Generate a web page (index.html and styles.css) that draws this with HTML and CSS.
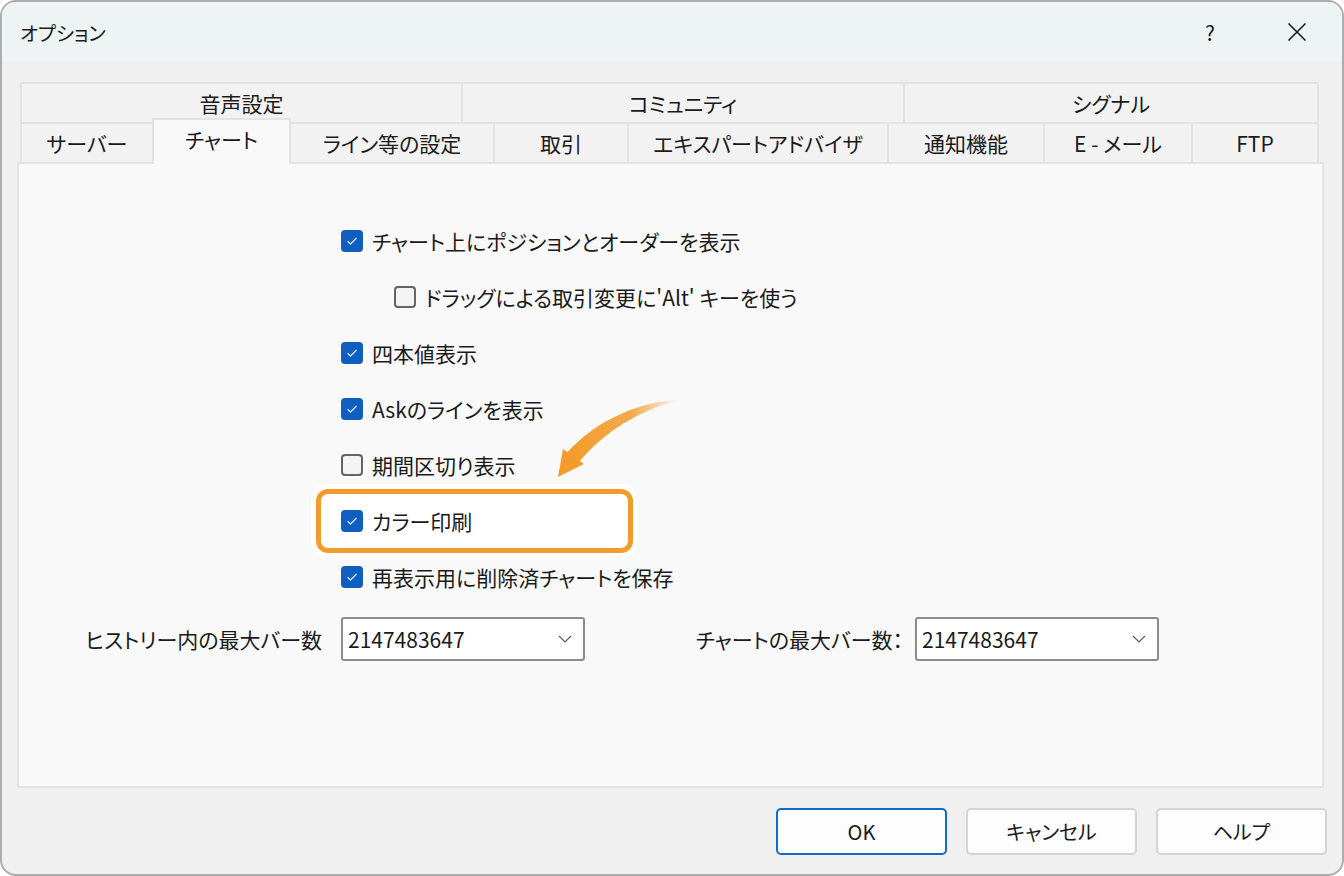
FILE: index.html
```html
<!DOCTYPE html>
<html lang="ja">
<head>
    <meta charset="UTF-8">
    <title>オプション</title>
    <link rel="stylesheet" href="styles.css">
</head>
<body>
    <div class="window">
        <div class="titlebar">
            <span class="title">オプション</span>
            <span class="help">?</span>
            <span class="close">
                <svg width="20" height="20" viewBox="0 0 20 20"><path d="M1.5 1.5 L18.5 18.5 M18.5 1.5 L1.5 18.5" stroke="#1a1a1a" stroke-width="1.6" fill="none"/></svg>
            </span>
        </div>
        <div class="body">
            <div class="tabs">
                <div class="tab-row row-top">
                    <div class="tab">音声設定</div>
                    <div class="tab">コミュニティ</div>
                    <div class="tab last">シグナル</div>
                </div>
                <div class="tab-row row-bottom">
                    <div class="tab">サーバー</div>
                    <div class="tab active">チャート</div>
                    <div class="tab">ライン等の設定</div>
                    <div class="tab">取引</div>
                    <div class="tab">エキスパートアドバイザ</div>
                    <div class="tab">通知機能</div>
                    <div class="tab">E - メール</div>
                    <div class="tab last">FTP</div>
                </div>
            </div>

            <div class="panel">
                <!-- annotation arrow -->
                <svg class="arrow" width="130" height="84" viewBox="0 0 130 84">
                    <defs>
                        <linearGradient id="fade" x1="128" y1="0" x2="20" y2="0" gradientUnits="userSpaceOnUse">
                            <stop offset="0" stop-color="#f39c2d" stop-opacity="0"/>
                            <stop offset="0.45" stop-color="#f39c2d" stop-opacity="0.85"/>
                            <stop offset="1" stop-color="#f39c2d"/>
                        </linearGradient>
                    </defs>
                    <path d="M127 2 C92 3 45 20 14 56 L27 64 C52 34 88 12 127 2 Z" fill="url(#fade)"/>
                    <polygon points="6,79 11,51 32,66" fill="#f39c2d"/>
                </svg>

                <div class="options">
                    <div class="option"><span class="check on"><svg width="12" height="10" viewBox="0 0 12 10"><path d="M1.5 5.2 L4.5 8 L10.5 2" stroke="#d5e3f5" stroke-width="1.3" fill="none"/></svg></span>チャート上にポジションとオーダーを表示</div>
                    <div class="option sub"><span class="check"></span>ドラッグによる取引変更に'Alt' キーを使う</div>
                    <div class="option"><span class="check on"><svg width="12" height="10" viewBox="0 0 12 10"><path d="M1.5 5.2 L4.5 8 L10.5 2" stroke="#d5e3f5" stroke-width="1.3" fill="none"/></svg></span>四本値表示</div>
                    <div class="option"><span class="check on"><svg width="12" height="10" viewBox="0 0 12 10"><path d="M1.5 5.2 L4.5 8 L10.5 2" stroke="#d5e3f5" stroke-width="1.3" fill="none"/></svg></span>Askのラインを表示</div>
                    <div class="option"><span class="check"></span>期間区切り表示</div>
                    <div class="option marked">
                        <span class="mark"></span>
                        <span class="check on"><svg width="12" height="10" viewBox="0 0 12 10"><path d="M1.5 5.2 L4.5 8 L10.5 2" stroke="#d5e3f5" stroke-width="1.3" fill="none"/></svg></span>カラー印刷
                    </div>
                    <div class="option"><span class="check on"><svg width="12" height="10" viewBox="0 0 12 10"><path d="M1.5 5.2 L4.5 8 L10.5 2" stroke="#d5e3f5" stroke-width="1.3" fill="none"/></svg></span>再表示用に削除済チャートを保存</div>
                </div>

                <div class="bars">
                    <span class="bars-label first">ヒストリー内の最大バー数</span>
                    <div class="combo">
                        <span>2147483647</span>
                        <svg width="14" height="8" viewBox="0 0 14 8"><path d="M1 1 L7 7 L13 1" stroke="#5c5c5c" stroke-width="1.2" fill="none"/></svg>
                    </div>
                    <span class="bars-label second">チャートの最大バー数：</span>
                    <div class="combo">
                        <span>2147483647</span>
                        <svg width="14" height="8" viewBox="0 0 14 8"><path d="M1 1 L7 7 L13 1" stroke="#5c5c5c" stroke-width="1.2" fill="none"/></svg>
                    </div>
                </div>
            </div>

            <div class="buttons">
                <button class="btn primary">OK</button>
                <button class="btn">キャンセル</button>
                <button class="btn">ヘルプ</button>
            </div>
        </div>
    </div>
</body>
</html>
```

FILE: styles.css
```css
* {
    box-sizing: border-box;
}
body {
    margin: 0;
    background: #fff;
    font-family: "Noto Sans CJK JP", "Noto Sans", sans-serif;
    font-feature-settings: "palt";
    color: #1a1a1a;
}
.window {
    width: 1344px;
    height: 876px;
    border: 2px solid #adadad;
    border-radius: 16px;
    overflow: hidden;
    background: #f0f0f0;
}
.titlebar {
    height: 60px;
    background: #eef4f3;
    display: flex;
    align-items: center;
    padding-left: 18px;
}
.title {
    font-size: 19.5px;
    flex: 1;
}
.help {
    font-size: 21px;
    width: 30px;
    text-align: center;
    margin-right: 62px;
}
.close {
    display: flex;
    margin-right: 35px;
}
.body {
    padding: 20px 15px 0 15px;
}
.tabs {
    margin: 0 5px 0 3px;
    font-size: 21px;
}
.tab-row {
    display: grid;
    height: 40px;
}
.row-top {
    grid-template-columns: 441px 442px 416px;
}
.row-bottom {
    grid-template-columns: 132px 139px 202px 134px 260px 156px 148px 128px;
}
.tab {
    height: 40px;
    background: #f2f2f2;
    border-top: 2px solid #e3e3e3;
    border-left: 2px solid #e3e3e3;
    display: flex;
    align-items: center;
    justify-content: center;
    line-height: 1;
}
.tab.last {
    border-right: 2px solid #e3e3e3;
}
.tab.active {
    position: relative;
    z-index: 2;
    height: 46px;
    margin-top: -4px;
    background: #f9f9f9;
    border-right: 2px solid #e3e3e3;
    padding-bottom: 6px;
}
.tab.active + .tab {
    border-left: none;
}
.panel {
    position: relative;
    width: 1307px;
    height: 626px;
    background: #f9f9f9;
    border: 2px solid #e3e3e3;
    padding-top: 49px;
    font-size: 21px;
}
.arrow {
    position: absolute;
    left: 533px;
    top: 234px;
    z-index: 3;
}
.options {
    padding-left: 322px;
}
.option {
    position: relative;
    height: 56px;
    display: flex;
    align-items: center;
    gap: 9px;
}
.option.sub {
    padding-left: 53px;
}
.check {
    position: relative;
    z-index: 1;
    width: 22px;
    height: 22px;
    border: 2px solid #646464;
    border-radius: 4px;
    background: #f3f3f3;
    display: flex;
    align-items: center;
    justify-content: center;
}
.check.on {
    border: none;
    background: #0e5fc0;
}
.option.marked {
    z-index: 1;
    isolation: isolate;
}
.mark {
    position: absolute;
    z-index: -1;
    left: -25px;
    top: -4px;
    width: 317px;
    height: 64px;
    border: 5px solid #f39c2d;
    border-radius: 12px;
    background: #fff;
    box-shadow: 0 0 0 5px #fff;
}
.bars {
    display: flex;
    align-items: center;
    margin-top: 12px;
}
.bars-label {
    text-align: right;
}
.bars-label.first {
    width: 303px;
    margin-right: 19px;
}
.bars-label.second {
    width: 318px;
    margin-right: 12px;
}
.combo {
    width: 244px;
    height: 44px;
    border: 2px solid #8c8c8c;
    border-radius: 3px;
    background: #fff;
    display: flex;
    align-items: center;
    justify-content: space-between;
    padding: 0 11px 0 5px;
    font-size: 21px;
}
.buttons {
    display: flex;
    justify-content: flex-end;
    gap: 19px;
    margin-top: 20px;
}
.btn {
    width: 171px;
    height: 47px;
    background: #fdfdfd;
    border: 2px solid #d4d4d4;
    border-radius: 5px;
    font-family: inherit;
    font-feature-settings: "palt";
    font-size: 20px;
    color: #1a1a1a;
}
.btn.primary {
    border-color: #0f6cc4;
}
```
